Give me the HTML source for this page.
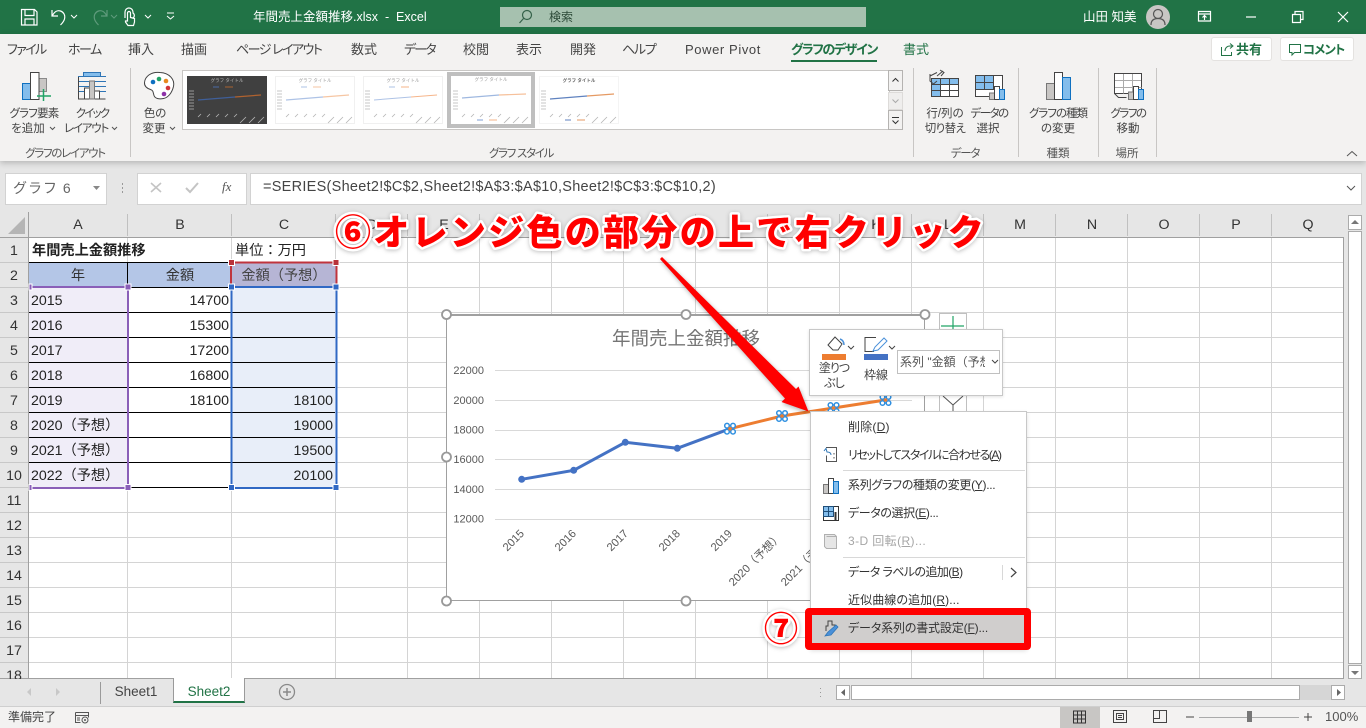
<!DOCTYPE html>
<html lang="ja"><head><meta charset="utf-8"><title>年間売上金額推移.xlsx - Excel</title>
<style>
html,body{margin:0;padding:0}
body{width:1366px;height:728px;position:relative;overflow:hidden;background:#e6e6e6;font-family:"Liberation Sans","Noto Sans CJK JP",sans-serif;color:#444}
.t{position:absolute;white-space:nowrap;line-height:20px;font-style:normal;font-size:12px;font-feature-settings:"palt"}
.c{transform:translateX(-50%)}
.r{transform:translateX(-100%)}
.b{position:absolute}
svg{position:absolute;overflow:visible}
.tab{font-size:13px;color:#444;top:40px}
.cell{font-size:14.2px;color:#222;font-feature-settings:normal}
.rh{font-size:14.2px;color:#333;font-feature-settings:normal}
.ch{font-size:14.2px;color:#333;top:215px}
.m{font-size:12px;color:#333;left:848px}
.m u{text-underline-offset:1px}
.rb{font-size:11.5px;color:#444}
.gl{font-size:11.5px;color:#555;top:144px}
</style></head><body>

<!-- title bar -->
<div class="b" style="left:0;top:0;width:1366px;height:34px;background:#217346"></div>
<div class="b" style="left:500px;top:7px;width:366px;height:20px;background:#a6c1af"></div>
<svg style="left:0;top:0" width="1366" height="34" fill="none" stroke="#fff" stroke-width="1.2">
<path d="M21.500 9.500h13l2.500 2.500v13h-15.500z M25 9.500v6h9v-6 M25 25v-6h9v6"/>
<path d="M52 10v6h6 M52.500 15.500c2-4 5-5.500 8-4.500 3 1 5 4 4 8-.5 2-2 4-4 6"/>
<path d="M71 15l3 3 3-3" stroke-width="1"/>
<path d="M107 10v6h-6 M106.500 15.500c-2-4-5-5.500-8-4.500-3 1-5 4-4 8 .5 2 2 4 4 6" stroke="#5f9b7c"/>
<path d="M111 15l3 3 3-3" stroke="#5f9b7c" stroke-width="1"/>
<path d="M125 18v-6a4 4 0 0 1 8 0v1a3 3 0 0 1 0 5 M128 25.500l-2.500-3.500v-1h2v-8a1.500 1.500 0 0 1 3 0v4.500l4 1v3.500l-1 3.500z"/>
<path d="M145 15l3 3 3-3 M167 13h7 M167 16l3.500 3 3.500-3" stroke-width="1"/>
<circle cx="527" cy="15" r="4.500" stroke="#35624a"/><path d="M523.500 18.500l-4 4.500" stroke="#35624a"/>
<circle cx="1158" cy="17" r="12" fill="#c8c6c4" stroke="none"/>
<circle cx="1158" cy="14" r="4.500" stroke="#555"/><path d="M1151 25c0-5 3-6.500 7-6.500s7 1.500 7 6.500" stroke="#555"/>
<path d="M1198.500 11.500h12v9.500h-12z M1198.500 14h12 M1204.500 20v-4 M1202.500 17.500l2-2 2 2"/>
<path d="M1246 17h10"/>
<path d="M1292.500 14.500h8v8h-8z M1295 14v-2.500h8v8h-2.500"/>
<path d="M1338 12l10 10 M1348 12l-10 10"/>
</svg>
<i class="t" style="left:253px;top:7px;color:#fff;font-size:12.500px">年間売上金額推移.xlsx&nbsp; -&nbsp; Excel</i>
<i class="t" style="left:549px;top:7px;color:#2c4a38;font-size:12px">検索</i>
<i class="t" style="left:1083px;top:7px;color:#fff;font-size:12.500px">山田 知美</i>

<!-- ribbon -->
<div class="b" style="left:0;top:34px;width:1366px;height:127px;background:#f3f2f1;box-shadow:0 2px 6px rgba(0,0,0,.22)"></div>
<i class="t tab" style="left:7px;letter-spacing:-1.600px">ファイル</i>
<i class="t tab" style="left:68px;letter-spacing:-1.500px">ホーム</i>
<i class="t tab" style="left:128px">挿入</i>
<i class="t tab" style="left:181px">描画</i>
<i class="t tab" style="left:236px;letter-spacing:-1.500px">ページ レイアウト</i>
<i class="t tab" style="left:351px">数式</i>
<i class="t tab" style="left:404px;letter-spacing:-1.800px">データ</i>
<i class="t tab" style="left:463px">校閲</i>
<i class="t tab" style="left:516px">表示</i>
<i class="t tab" style="left:570px">開発</i>
<i class="t tab" style="left:622px;letter-spacing:-1.300px">ヘルプ</i>
<i class="t tab" style="left:685px;letter-spacing:.6px">Power Pivot</i>
<i class="t tab" style="left:791px;color:#217346;font-weight:700;letter-spacing:-1.400px">グラフのデザイン</i>
<div class="b" style="left:791px;top:60px;width:86px;height:2px;background:#217346"></div>
<i class="t tab" style="left:903px;color:#217346">書式</i>
<div class="b" style="left:1212px;top:38px;width:59px;height:22px;background:#fff;border-radius:2px;box-shadow:0 0 0 1px #e4e2e0"></div>
<div class="b" style="left:1281px;top:38px;width:72px;height:22px;background:#fff;border-radius:2px;box-shadow:0 0 0 1px #e4e2e0"></div>
<i class="t" style="left:1236px;top:40px;color:#217346;font-weight:700;font-size:13px">共有</i>
<i class="t" style="left:1303px;top:40px;color:#217346;font-weight:700;font-size:12.500px;letter-spacing:-1px">コメント</i>
<svg style="left:0;top:0" width="1366" height="170" fill="none" stroke="#217346">
<path d="M1221.500 47v8.500h10V52 M1225 51c0-3 2-5 5-5h2 M1230 43.500l3 2.500-3 2.500"/>
<path d="M1289.500 44.500h11v8h-6l-2.500 2.500v-2.500h-2.500z"/>
<path d="M130.500 68v89 M913.500 68v89 M1018.500 68v89 M1098.500 68v89 M1156.500 68v89" stroke="#c8c6c4"/>
<path d="M1347 156l5-4.500 5 4.500" stroke="#555"/>
<!-- add element -->
<path d="M22.500 83.500h9v16h-9z" fill="#83bdec" stroke="#0e70c0"/>
<path d="M39 78.500h7.500v13H39z" fill="#c8c6c4" stroke="#8a8a8a"/>
<path d="M30.500 72.500h8.500v27h-8.500z" fill="#fff" stroke="#444"/>
<path d="M43.500 89v12 M37 96h14" stroke="#21a366" stroke-width="1.500"/>
<!-- quick layout -->
<path d="M78 76.500h28 M78 81.500h28 M78 86.500h28 M78 91.500h28" stroke="#2e75b6"/>
<path d="M83.500 72.500h17v4h-17z" fill="#83bdec" stroke="#2e75b6"/>
<path d="M78.500 77v22h27" stroke="#444"/>
<path d="M84.500 88h5v11h-5z M94.500 91h5v8h-5z" fill="#fff" stroke="#444"/>
<path d="M89.500 81h5v18h-5z" fill="#c8c6c4" stroke="#777"/>
<!-- palette -->
<path d="M160 72.500c-9-1-15 4-15.500 10-.3 4 3 6 6 7 3 1 2.500 3 3.500 6 1 3 5 4 9.500 3 5-1 8.500-6 10-12 1.500-7-4-13.500-13.500-14z" fill="#fff" stroke="#444"/>
<g stroke="none"><circle cx="153" cy="82" r="2.300" fill="#0e70c0"/><circle cx="159" cy="79" r="2.300" fill="#21a366"/><circle cx="166" cy="81" r="2.300" fill="#e8891f"/><circle cx="168" cy="88" r="2.300" fill="#d13438"/><circle cx="164" cy="94" r="2.300" fill="#8e32a8"/></g>
<!-- row/col -->
<path d="M931.500 78.500h27v18h-27z" fill="#fff" stroke="#444"/>
<path d="M931.500 78.500h27v6h-27z M931.500 84.500h9v12h-9z" fill="#83bdec" stroke="#444"/>
<path d="M940.500 78.500v18 M949.500 78.500v18 M931.500 90.500h27" stroke="#444"/>
<path d="M930 76l7-3.500 M937 76l6-5 M940 70l4 2.500-3 3.500 M930 74v7l3.500 3 3.500-3" stroke="#444"/>
<!-- select data -->
<path d="M975.500 75.500h27v21h-27z" fill="#fff" stroke="#444"/>
<path d="M975.500 75.500h18v14h-18z" fill="#83bdec" stroke="#444"/>
<path d="M984.500 75.500v14 M975.500 82.500h18" stroke="#444"/>
<path d="M989.500 93h5v6.500h-5z" fill="#c8c6c4" stroke="#777"/>
<path d="M994.500 86.500h5v13h-5z" fill="#fff" stroke="#444"/>
<path d="M999.500 89.500h5v10h-5z" fill="#83bdec" stroke="#0e70c0"/>
<!-- change type -->
<path d="M1046.500 83.500h8v16h-8z" fill="#c8c6c4" stroke="#777"/>
<path d="M1054.500 72.500h8v27h-8z" fill="#fff" stroke="#444"/>
<path d="M1062.500 77.500h8v22h-8z" fill="#83bdec" stroke="#0e70c0"/>
<!-- move -->
<path d="M1114.500 73.500h27v20h-27z" fill="#fff" stroke="#444"/>
<path d="M1114.500 80.500h27 M1114.500 87.500h27 M1123.500 73.500v20 M1132.500 73.500v20" stroke="#aaa"/>
<path d="M1114.500 73.500h27v12 M1114.500 73.500v20l4 4h8" stroke="#444"/>
<path d="M1128.500 92h5v7.500h-5z" fill="#c8c6c4" stroke="#777"/>
<path d="M1133.500 86.500h5v13h-5z" fill="#fff" stroke="#444"/>
<path d="M1138.500 89.500h5v10h-5z" fill="#83bdec" stroke="#0e70c0"/>
<path d="M50 127l2.500 2.500 2.500-2.500 M112 127l2.500 2.500 2.500-2.500 M170 127l2.500 2.500 2.500-2.500" stroke="#555"/>
</svg>
<i class="t rb c" style="left:34px;top:104px;letter-spacing:-.8px">グラフ要素</i>
<i class="t rb c" style="left:28px;top:119px">を追加</i>
<i class="t rb c" style="left:92px;top:104px;letter-spacing:-1.800px">クイック</i>
<i class="t rb c" style="left:86px;top:119px;letter-spacing:-1.200px">レイアウト</i>
<i class="t rb c" style="left:155px;top:104px">色の</i>
<i class="t rb c" style="left:154px;top:119px">変更</i>
<i class="t gl c" style="left:65px;letter-spacing:-1.300px">グラフのレイアウト</i>
<i class="t gl c" style="left:521px;letter-spacing:-1.300px">グラフ スタイル</i>
<i class="t gl c" style="left:965px;letter-spacing:-1.200px">データ</i>
<i class="t gl c" style="left:1058px">種類</i>
<i class="t gl c" style="left:1127px">場所</i>
<i class="t rb c" style="left:945px;top:104px">行/列の</i>
<i class="t rb c" style="left:945px;top:119px;letter-spacing:-.6px">切り替え</i>
<i class="t rb c" style="left:989px;top:104px;letter-spacing:-1.500px">データの</i>
<i class="t rb c" style="left:988px;top:119px">選択</i>
<i class="t rb c" style="left:1058px;top:104px;letter-spacing:-1px">グラフの種類</i>
<i class="t rb c" style="left:1058px;top:119px">の変更</i>
<i class="t rb c" style="left:1128px;top:104px;letter-spacing:-1.500px">グラフの</i>
<i class="t rb c" style="left:1128px;top:119px">移動</i>

<!-- gallery -->
<div class="b" style="left:182px;top:70px;width:706px;height:58px;background:#fff;border:1px solid #c8c6c4;box-sizing:content-box"></div>
<svg style="left:0;top:0" width="1366" height="170" font-family="Liberation Sans,Noto Sans CJK JP,sans-serif">
<defs>
<g id="ax" stroke="#b5b5b5" stroke-width=".8" fill="none">
<path d="M2 15h5M2 18h5M2 21h5M2 24h5M2 27h5M2 30h5M2 33h5"/>
<path d="M11 41l3-3M20 41l3-3M29 41l3-3M38 41l3-3M47 41l3-3M53 47l6-6M62 47l6-6M71 47l6-6"/>
</g>
</defs>
<rect x="187" y="76" width="80" height="48" fill="#404040"/>
<g transform="translate(187 76)"><use href="#ax"/><path d="M26 11h6" stroke="#4a6aa5"/><path d="M38 11h8" stroke="#a9622f"/><path d="M11 24l37-3" stroke="#3f5f99" fill="none" stroke-width="1.200"/><path d="M48 21l26-2" stroke="#b0622f" fill="none" stroke-width="1.200"/><text x="40" y="6" font-size="4.500" fill="#bbb" text-anchor="middle">グラフ タイトル</text></g>
<g transform="translate(275 76)"><rect x=".5" y=".5" width="79" height="47" fill="#fff" stroke="#f0f0f0"/><use href="#ax"/><path d="M26 11h6" stroke="#aec3e6"/><path d="M38 11h8" stroke="#f6c6a3"/><path d="M11 24l37-3" stroke="#aec3e6" fill="none" stroke-width="1.200"/><path d="M48 21l26-2" stroke="#f6c6a3" fill="none" stroke-width="1.200"/><text x="40" y="6" font-size="4.500" fill="#999" text-anchor="middle">グラフ タイトル</text></g>
<g transform="translate(363 76)"><rect x=".5" y=".5" width="79" height="47" fill="#fff" stroke="#f0f0f0"/><use href="#ax"/><path d="M26 11h6" stroke="#aec3e6"/><path d="M38 11h8" stroke="#f6b58a"/><path d="M11 24l37-3" stroke="#aec3e6" fill="none"/><path d="M48 21l26-2" stroke="#f6b58a" fill="none"/><text x="40" y="6" font-size="4.500" fill="#999" text-anchor="middle">グラフ タイトル</text></g>
<rect x="449" y="74" width="84" height="52" fill="#fff" stroke="#bfbfbf" stroke-width="4"/>
<g transform="translate(451 76)"><use href="#ax"/><path d="M26 44h6" stroke="#7f9fd6"/><path d="M38 44h8" stroke="#f6b58a"/><path d="M11 22l37-3" stroke="#9fb8e0" fill="none" stroke-width="1.200"/><path d="M48 19l27-1" stroke="#f6c09a" fill="none" stroke-width="1.200"/><text x="40" y="5" font-size="4.500" fill="#999" text-anchor="middle">グラフ タイトル</text></g>
<g transform="translate(539 76)"><rect x=".5" y=".5" width="79" height="47" fill="#fff" stroke="#f4f4f4"/><use href="#ax"/><path d="M26 44h6" stroke="#5f82bf"/><path d="M38 44h8" stroke="#e59a63"/><path d="M11 23l37-3" stroke="#5f82bf" fill="none" stroke-width="1.200"/><path d="M48 20l27-2" stroke="#e59a63" fill="none" stroke-width="1.200"/><text x="40" y="6" font-size="4.500" fill="#666" text-anchor="middle" font-weight="700">グラフ タイトル</text></g>
<path d="M888.500 70.500h14v20h-14z M888.500 110.500h14v19h-14z" fill="#f3f2f1" stroke="#b5b3b1"/>
<path d="M888.500 92.500h14v17h-14z" fill="#efeeed" stroke="#dddbd9"/>
<path d="M892.500 81.500l3-3 3 3 M892 117.500h7 M892.500 120.500l3 3 3-3" fill="none" stroke="#333"/>
<path d="M892.500 99.500l3 3 3-3" fill="none" stroke="#aaa"/>
</svg>

<!-- formula bar -->
<div class="b" style="left:5px;top:173px;width:100px;height:30px;background:#fff;border:1px solid #d2d2d2"></div>
<i class="t" style="left:13px;top:178px;font-size:14px;color:#666;letter-spacing:1px;font-feature-settings:normal;">グラフ 6</i>
<div class="b" style="left:137px;top:173px;width:108px;height:30px;background:#fff;border:1px solid #d2d2d2"></div>
<div class="b" style="left:250px;top:173px;width:1110px;height:30px;background:#fff;border:1px solid #d2d2d2"></div>
<i class="t" style="left:263px;top:177px;font-size:14.500px;color:#444;letter-spacing:.27px;font-feature-settings:normal">=SERIES(Sheet2!$C$2,Sheet2!$A$3:$A$10,Sheet2!$C$3:$C$10,2)</i>
<i class="t" style="left:222px;top:177px;font-family:'Liberation Serif',serif;font-size:13px;font-style:italic;color:#555">fx</i>
<svg style="left:0;top:0" width="1366" height="240" fill="none">
<path d="M93 186h7l-3.500 4z" fill="#888"/>
<path d="M122.500 183v2 M122.500 187v2 M122.500 191v2" stroke="#999"/>
<path d="M151 183l10 9 M161 183l-10 9" stroke="#c4c4c4" stroke-width="1.600"/>
<path d="M186 188l4 4 8-9" stroke="#c4c4c4" stroke-width="2"/>
<path d="M1347 186l4 4 4-4" stroke="#555"/>
</svg>

<!-- grid -->
<div class="b" style="left:0;top:212px;width:1344px;height:466px;background:#fff"></div>
<div class="b" style="left:0;top:212px;width:1344px;height:25px;background:#e6e6e6"></div>
<div class="b" style="left:0;top:212px;width:28px;height:466px;background:#e6e6e6"></div>
<svg style="left:0;top:0" width="1366" height="728" fill="none">
<path stroke="#d4d4d4" d="M28 262.500H1344M28 287.500H1344M28 312.500H1344M28 337.500H1344M28 362.500H1344M28 387.500H1344M28 412.500H1344M28 437.500H1344M28 462.500H1344M28 487.500H1344M28 512.500H1344M28 537.500H1344M28 562.500H1344M28 587.500H1344M28 612.500H1344M28 637.500H1344M28 662.500H1344"/>
<path stroke="#d4d4d4" d="M127.500 237V678M231.500 237V678M335.500 237V678M407.500 237V678M479.500 237V678M551.500 237V678M623.500 237V678M695.500 237V678M767.500 237V678M839.500 237V678M911.500 237V678M983.500 237V678M1055.500 237V678M1127.500 237V678M1199.500 237V678M1271.500 237V678M1343.500 237V678"/>
<path stroke="#c0c0c0" d="M127.500 214V236M231.500 214V236M335.500 214V236M407.500 214V236M479.500 214V236M551.500 214V236M623.500 214V236M695.500 214V236M767.500 214V236M839.500 214V236M911.500 214V236M983.500 214V236M1055.500 214V236M1127.500 214V236M1199.500 214V236M1271.500 214V236"/>
<path stroke="#c8c8c8" d="M0 262.500H28M0 287.500H28M0 312.500H28M0 337.500H28M0 362.500H28M0 387.500H28M0 412.500H28M0 437.500H28M0 462.500H28M0 487.500H28M0 512.500H28M0 537.500H28M0 562.500H28M0 587.500H28M0 612.500H28M0 637.500H28M0 662.500H28"/>
<path stroke="#a0a0a0" d="M0 237.500H1344M28.500 212V678M0 678.500H1344M1343.500 237V678"/>
<path d="M25 217v17H8z" fill="#b5b5b5"/>
</svg>
<i class="t ch c" style="left:78px">A</i><i class="t ch c" style="left:180px">B</i><i class="t ch c" style="left:284px">C</i>
<i class="t ch c" style="left:372px">D</i><i class="t ch c" style="left:444px">E</i><i class="t ch c" style="left:516px">F</i><i class="t ch c" style="left:588px">G</i><i class="t ch c" style="left:660px">H</i><i class="t ch c" style="left:732px">I</i><i class="t ch c" style="left:804px">J</i><i class="t ch c" style="left:876px">K</i><i class="t ch c" style="left:948px">L</i><i class="t ch c" style="left:1020px">M</i><i class="t ch c" style="left:1092px">N</i><i class="t ch c" style="left:1164px">O</i><i class="t ch c" style="left:1236px">P</i><i class="t ch c" style="left:1308px">Q</i>
<i class="t rh c" style="left:14px;top:241px">1</i><i class="t rh c" style="left:14px;top:266px">2</i><i class="t rh c" style="left:14px;top:291px">3</i><i class="t rh c" style="left:14px;top:316px">4</i><i class="t rh c" style="left:14px;top:341px">5</i><i class="t rh c" style="left:14px;top:366px">6</i><i class="t rh c" style="left:14px;top:391px">7</i><i class="t rh c" style="left:14px;top:416px">8</i><i class="t rh c" style="left:14px;top:441px">9</i><i class="t rh c" style="left:14px;top:466px">10</i><i class="t rh c" style="left:14px;top:491px">11</i><i class="t rh c" style="left:14px;top:516px">12</i><i class="t rh c" style="left:14px;top:541px">13</i><i class="t rh c" style="left:14px;top:566px">14</i><i class="t rh c" style="left:14px;top:591px">15</i><i class="t rh c" style="left:14px;top:616px">16</i><i class="t rh c" style="left:14px;top:641px">17</i><i class="t rh c" style="left:14px;top:666px">18</i>

<!-- cell fills -->
<div class="b" style="left:29px;top:263px;width:202px;height:25px;background:#b4c6e7"></div>
<div class="b" style="left:232px;top:263px;width:104px;height:25px;background:#b6b5d5"></div>
<div class="b" style="left:29px;top:288px;width:99px;height:200px;background:#f0edf8"></div>
<div class="b" style="left:232px;top:288px;width:104px;height:200px;background:#e8eef9"></div>
<svg style="left:0;top:0" width="1366" height="728" fill="none">
<path stroke="#000" d="M29 262.500H335M29 287.500H335M29 312.500H335M29 337.500H335M29 362.500H335M29 387.500H335M29 412.500H335M29 437.500H335M29 462.500H335M29 487.500H335M127.500 262V288"/>
<path stroke="#c0343d" stroke-width="2" d="M231 262.500H336.500V287 M231 262.500V287"/>
<path stroke="#8a5fb8" stroke-width="2" d="M30 287H128V488H30"/>
<path stroke="#3068c4" stroke-width="2" d="M336.500 287H231.500V488H336.500Z"/>
<g stroke="#fff" stroke-width="1">
<rect x="228.500" y="259.500" width="6" height="6" fill="#b8323a"/><rect x="333" y="259.500" width="6" height="6" fill="#b8323a"/>
<rect x="228.500" y="284" width="6" height="6" fill="#3068c4"/><rect x="333" y="284" width="6" height="6" fill="#3068c4"/>
<rect x="228.500" y="484.500" width="6" height="6" fill="#3068c4"/><rect x="333" y="484.500" width="6" height="6" fill="#3068c4"/>
<rect x="125" y="284" width="6" height="6" fill="#8a5fb8"/><rect x="125" y="484.500" width="6" height="6" fill="#8a5fb8"/>
<rect x="29" y="284" width="3" height="6" fill="#8a5fb8"/><rect x="29" y="484.500" width="3" height="6" fill="#8a5fb8"/>
</g>
</svg>
<!-- cells -->
<i class="t cell" style="left:32px;top:241px;font-weight:700">年間売上金額推移</i>
<i class="t cell" style="left:235px;top:241px">単位：万円</i>
<i class="t cell c" style="left:78px;top:266px;color:#333">年</i>
<i class="t cell c" style="left:180px;top:266px;color:#333">金額</i>
<i class="t cell c" style="left:284px;top:266px;color:#444">金額（予想）</i>
<i class="t cell" style="left:31px;top:291px">2015</i><i class="t cell" style="left:31px;top:316px">2016</i><i class="t cell" style="left:31px;top:341px">2017</i><i class="t cell" style="left:31px;top:366px">2018</i><i class="t cell" style="left:31px;top:391px">2019</i>
<i class="t cell" style="left:31px;top:416px">2020（予想）</i><i class="t cell" style="left:31px;top:441px">2021（予想）</i><i class="t cell" style="left:31px;top:466px">2022（予想）</i>
<i class="t cell r" style="left:229px;top:291px">14700</i><i class="t cell r" style="left:229px;top:316px">15300</i><i class="t cell r" style="left:229px;top:341px">17200</i><i class="t cell r" style="left:229px;top:366px">16800</i><i class="t cell r" style="left:229px;top:391px">18100</i>
<i class="t cell r" style="left:333px;top:391px">18100</i><i class="t cell r" style="left:333px;top:416px">19000</i><i class="t cell r" style="left:333px;top:441px">19500</i><i class="t cell r" style="left:333px;top:466px">20100</i>

<!-- chart -->
<div class="b" style="left:446px;top:314px;width:479px;height:287px;background:#fff;border:1px solid #a0a0a0;border-top:2px solid #a0a0a0;box-sizing:border-box"></div>
<i class="t c" style="left:686px;top:329px;font-size:18.500px;color:#757575;font-feature-settings:normal">年間売上金額推移</i>
<svg style="left:0;top:0" width="1366" height="728" fill="none" font-family="Liberation Sans,Noto Sans CJK JP,sans-serif">
<path stroke="#d9d9d9" d="M495 370.500H912M495 400.500H912M495 430.500H912M495 459.500H912M495 489.500H912M495 519.500H912"/>
<g fill="#595959" font-size="11" text-anchor="end">
<text x="484" y="374">22000</text><text x="484" y="404">20000</text><text x="484" y="433.500">18000</text><text x="484" y="463">16000</text><text x="484" y="493">14000</text><text x="484" y="522.500">12000</text>
</g>
<g fill="#595959" font-size="11.200" text-anchor="middle">
<text transform="translate(516 543) rotate(-45)">2015</text>
<text transform="translate(568 543) rotate(-45)">2016</text>
<text transform="translate(620 543) rotate(-45)">2017</text>
<text transform="translate(672 543) rotate(-45)">2018</text>
<text transform="translate(724 543) rotate(-45)">2019</text>
<text transform="translate(758 562) rotate(-45)">2020（予想）</text>
<text transform="translate(810 562) rotate(-45)">2021（予想）</text>
</g>
<path d="M521.700 479.300L573.700 470.300 625.300 442.300 677.300 448.300 730 428.700" stroke="#4472c4" stroke-width="3"/>
<path d="M730 428.700L782 416 833.500 408 885.500 400" stroke="#ed7d31" stroke-width="3"/>
<g fill="#4472c4"><circle cx="521.700" cy="479.300" r="3.500"/><circle cx="573.700" cy="470.300" r="3.500"/><circle cx="625.300" cy="442.300" r="3.500"/><circle cx="677.300" cy="448.300" r="3.500"/></g>
<defs><g id="sel" fill="#fff" stroke="#2e8fe0" stroke-width="1.500"><circle cx="-3" cy="-3" r="2.300"/><circle cx="3" cy="-3" r="2.300"/><circle cx="-3" cy="3" r="2.300"/><circle cx="3" cy="3" r="2.300"/><circle r="1.800" fill="#ed7d31" stroke="none"/></g></defs>
<use href="#sel" x="730" y="428.700"/><use href="#sel" x="782" y="416"/><use href="#sel" x="833.500" y="408"/><use href="#sel" x="885.500" y="400"/>
<g fill="#fff" stroke="#999" stroke-width="1.800">
<circle cx="446.500" cy="314.500" r="4.500"/><circle cx="686" cy="314.500" r="4.500"/><circle cx="925" cy="314.500" r="4.500"/>
<circle cx="446.500" cy="457" r="4.500"/><circle cx="446.500" cy="601" r="4.500"/><circle cx="686" cy="601" r="4.500"/>
</g>
<rect x="939.500" y="313.500" width="27" height="34" fill="#fff" stroke="#c0c0c0"/>
<path d="M953 316v17 M941 326h23" stroke="#21a366" stroke-width="1.200"/>
<rect x="939.500" y="392.500" width="27" height="22" fill="#fff" stroke="#c0c0c0"/>
<path d="M943 396l10 9v8 M963 396l-10 9" stroke="#555"/>
</svg>

<!-- mini toolbar -->
<div class="b" style="left:809px;top:329px;width:194px;height:67px;background:#fff;border:1px solid #c8c8c8;box-sizing:border-box;box-shadow:0 1px 3px rgba(0,0,0,.12)"></div>
<svg style="left:0;top:0" width="1366" height="728" fill="none" stroke="#444">
<path d="M828 345l7-8 7 7-4 6h-5z"/><path d="M840 339c3 1 4 3 4 6" stroke="#4a90d9" stroke-width="1.500"/>
<rect x="822" y="354" width="24" height="6" fill="#ed7d31" stroke="none"/>
<path d="M848 346l3 3 3-3 M889 346l3 3 3-3" />
<path d="M876 337.500h-11v14h9"/><path d="M873 351l2-4 9-9 3 3-9 9z" stroke="#4a90d9" fill="#fff"/>
<rect x="864" y="354" width="24" height="6" fill="#4472c4" stroke="none"/>
<rect x="897.500" y="350.500" width="102" height="23" fill="#fff" stroke="#c0c0c0"/>
<path d="M992 360l3 3 3-3"/>
</svg>
<i class="t c" style="left:834px;top:358px;letter-spacing:-1px">塗りつ</i>
<i class="t c" style="left:834px;top:373px;letter-spacing:-1px">ぶし</i>
<i class="t c" style="left:876px;top:365px">枠線</i>
<div class="b" style="left:899px;top:352px;width:86px;height:20px;overflow:hidden"><i class="t" style="left:1px;top:0;color:#555;font-feature-settings:normal;font-size:12px">系列 "金額（予想</i></div>

<!-- context menu -->
<div class="b" style="left:810px;top:411px;width:217px;height:238px;background:#fff;border:1px solid #c8c8c8;box-sizing:border-box;box-shadow:0 2px 4px rgba(0,0,0,.12)"></div>
<i class="t m" style="top:417px;letter-spacing:.2px">削除(<u>D</u>)</i>
<i class="t m" style="top:445px;letter-spacing:-1.400px">リセットしてスタイルに合わせる(<u>A</u>)</i>
<i class="t m" style="top:475px;letter-spacing:-.3px">系列グラフの種類の変更(<u>Y</u>)...</i>
<i class="t m" style="top:503px;letter-spacing:-.4px">データの選択(<u>E</u>)...</i>
<i class="t m" style="top:531px;color:#a6a6a6;letter-spacing:.4px">3-D 回転(<u>R</u>)...</i>
<i class="t m" style="top:562px;letter-spacing:-.6px">データ ラベルの追加(<u>B</u>)</i>
<i class="t m" style="top:590px;letter-spacing:.1px">近似曲線の追加(<u>R</u>)...</i>
<svg style="left:0;top:0" width="1366" height="728" fill="none">
<path d="M843 470.500H1025M843 557.500H1025" stroke="#d8d8d8"/>
<path d="M1002.500 565v15" stroke="#d8d8d8"/><path d="M1011 568l5 4.500-5 4.500" stroke="#444" stroke-width="1.200"/>
<path d="M826 447.500h10.500v14h-10v-6" stroke="#555"/><path d="M834 453v1.500M834 457v1.500" stroke="#555"/><path d="M824 451l2-2.500 1 3.500c3 0 4 1 4 3" stroke="#2e75b6"/>
<path d="M823.500 484.500h5v9h-5z" fill="#c8c6c4" stroke="#777"/><path d="M828.500 478.500h5v15h-5z" fill="#fff" stroke="#444"/><path d="M833.500 481.500h5v12h-5z" fill="#83bdec" stroke="#0e70c0"/>
<path d="M823.500 506.500h15v14h-15z" fill="#fff" stroke="#333"/><path d="M823.500 506.500h10v10h-10z" fill="#83bdec" stroke="#1f4e79"/><path d="M828.500 506.500v10 M823.500 511.500h10" stroke="#1f4e79"/><path d="M835.500 512v8.500" stroke="#333" stroke-width="2"/>
<path d="M824.500 534.500h10l2 2v12h-10l-2-2z" fill="#e6e6e6" stroke="#b0b0b0"/><path d="M826.500 536.500h10" stroke="#b0b0b0"/>
</svg>
<!-- highlight -->
<div class="b" style="left:805px;top:608px;width:226px;height:42px;background:#d0cecd;border:7px solid #ff0000;border-radius:4px;box-sizing:border-box"></div>
<i class="t m" style="top:618px;letter-spacing:-.15px">データ系列の書式設定(<u>F</u>)...</i>
<svg style="left:0;top:0" width="1366" height="728" fill="none">
<path d="M826 631v-5h2v-5h4v4h3v4" stroke="#444"/><path d="M825 636l3-4 8-7 2 2-7 8z" fill="#4a90d9" stroke="#2e75b6" stroke-width=".8"/>
</svg>

<!-- right scrollbar and bottom -->
<div class="b" style="left:1348px;top:215px;width:14px;height:15px;background:#fff;border:1px solid #ababab;box-sizing:border-box"></div>
<div class="b" style="left:1348px;top:231px;width:14px;height:433px;background:#fff;border:1px solid #ababab;box-sizing:border-box"></div>
<div class="b" style="left:1348px;top:665px;width:14px;height:14px;background:#fff;border:1px solid #ababab;box-sizing:border-box"></div>
<div class="b" style="left:0;top:679px;width:1366px;height:27px;background:#e6e6e6"></div>
<div class="b" style="left:0;top:706px;width:1366px;height:22px;background:#f3f2f1;border-top:1px solid #cfcfcf;box-sizing:border-box"></div>
<div class="b" style="left:1060px;top:707px;width:40px;height:21px;background:#c8c6c4"></div>
<div class="b" style="left:173px;top:678px;width:72px;height:25px;background:#fff;border:1px solid #9a9a9a;border-top:0;border-bottom:2px solid #217346;box-sizing:border-box;margin-top:0"></div>
<div class="b" style="left:836px;top:685px;width:14px;height:15px;background:#fff;border:1px solid #ababab;box-sizing:border-box"></div>
<div class="b" style="left:851px;top:685px;width:449px;height:15px;background:#fff;border:1px solid #ababab;box-sizing:border-box"></div>
<div class="b" style="left:1300px;top:685px;width:31px;height:15px;background:#d6d6d6"></div>
<div class="b" style="left:1331px;top:685px;width:14px;height:15px;background:#fff;border:1px solid #ababab;box-sizing:border-box"></div>
<i class="t c" style="left:136px;top:682px;font-size:13.500px;color:#444">Sheet1</i>
<i class="t c" style="left:209px;top:682px;font-size:13.500px;color:#217346">Sheet2</i>
<i class="t" style="left:8px;top:707px;font-size:12px;color:#444">準備完了</i>
<i class="t" style="left:1325px;top:707px;font-size:13px;color:#555;font-feature-settings:normal">100%</i>
<svg style="left:0;top:0" width="1366" height="728" fill="none">
<path d="M1351 224l4-4 4 4z M1351 671h8l-4 4z" fill="#777"/>
<path d="M31 688v8l-4-4z M56 688v8l4-4z" fill="#c8c8c8"/>
<path d="M100.500 682v22" stroke="#9a9a9a"/>
<circle cx="287" cy="692" r="7.500" stroke="#8a8a8a" stroke-width="1.300"/><path d="M283 692h8 M287 688v8" stroke="#8a8a8a" stroke-width="1.500"/>
<path d="M820.500 688v1 M820.500 692v1 M820.500 696v1" stroke="#999"/>
<path d="M845 689v7l-4-3.500z M1337 689v7l4-3.500z" fill="#666"/>
<path d="M75.500 712.500h13v5 M75.500 712.500v10h5 M75.500 715.500h13 M77 718h3 M77 720h3" stroke="#555"/><circle cx="85" cy="720" r="3" stroke="#555"/><circle cx="85" cy="720" r="1" fill="#555"/>
<path d="M1073.500 711v12h12v-12z M1077.500 711v12 M1081.500 711v12 M1073.500 715h12 M1073.500 719h12" stroke="#333"/>
<path d="M1113.500 710.500h13v12h-13z M1116.500 713.500h7v6h-7z M1118 715.500h4 M1118 717.500h4" stroke="#444"/>
<path d="M1153.500 710.500h13v12h-13z M1153.500 718.500h6v-8 M1159.500 718.500" stroke="#444"/>
<path d="M1186 717h8 M1304 717h8 M1308 713v8" stroke="#444"/>
<path d="M1199 717.500h100" stroke="#aaa"/>
<rect x="1247" y="711" width="5" height="11" fill="#777"/>
</svg>

<!-- annotations -->
<svg style="left:0;top:0;filter:drop-shadow(1px 2px 2px rgba(0,0,0,.3))" width="1366" height="728">
<polygon points="660,259 662,257 796,389 798.500,386.500 808.500,411.500 781.500,402 785,398.500" fill="#ff0000"/>
</svg>
<svg style="left:0;top:0;filter:drop-shadow(0 1px 2px rgba(0,0,0,.25))" width="1366" height="728" font-family="Liberation Sans,Noto Sans CJK JP,sans-serif">
<text x="335" y="245" font-size="36" font-weight="900" letter-spacing="2.300" fill="#ff0000" stroke="#fff" stroke-width="5" stroke-linejoin="round" style="paint-order:stroke fill">⑥オレンジ色の部分の上で右クリック</text>
<text x="764" y="641" font-size="34" font-weight="900" fill="#ff0000" stroke="#fff" stroke-width="5" stroke-linejoin="round" style="paint-order:stroke fill">⑦</text>
</svg>
</body></html>
